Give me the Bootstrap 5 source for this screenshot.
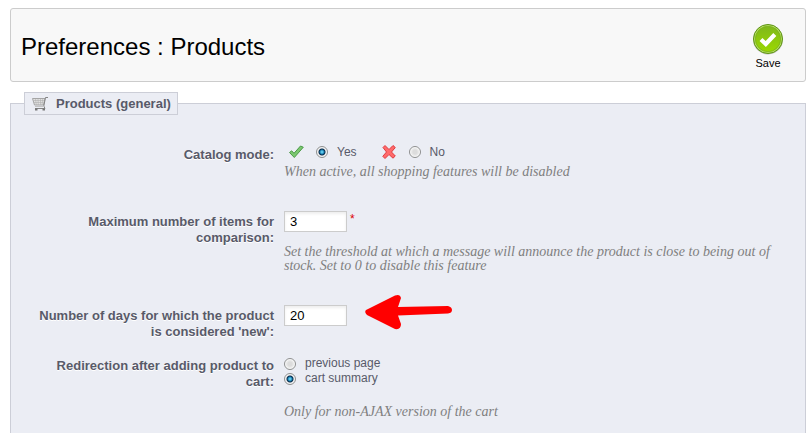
<!DOCTYPE html>
<html lang="en">
<head>
<meta charset="utf-8">
<meta name="viewport" content="width=device-width, initial-scale=1">
<title>Preferences : Products</title>
<link rel="stylesheet" href="https://cdn.jsdelivr.net/npm/bootstrap@5.3.0/dist/css/bootstrap.min.css">
<style>
body{font:12px/15px "Liberation Sans",Arial,sans-serif;color:#585a69;background:#fff;padding:8px 6px 0 10px}
.page-head{background:#f8f8f8;border:1px solid #ccc;border-radius:3px;padding:14px 21px 11px 10px;margin-bottom:10px}
.page-head h1{font-size:24px;line-height:28px;color:#000}
.save-btn{font-size:11px;line-height:14px;color:#000}
.save-btn svg{margin-bottom:1px}
.panel{background:#ebedf4;border:1px solid #ccced7;border-bottom:0;margin-top:11px;padding:0 35px 0 13px}
.panel-title{width:max-content;margin-top:-12px;margin-bottom:29px;padding:0 6px 0 7px;gap:8px;height:23px;border:1px solid #ccced7;background:#ebedf4;font-size:13px;line-height:21px;font-weight:bold}
.field{gap:10px;margin-bottom:32px}
.field-close{margin-bottom:15px}
.field-name{width:250px;flex:none;padding:3px 0 0 5px;text-align:right;font-size:13px;line-height:16px;font-weight:bold;text-shadow:0 1px 0 #fff}
.hint{font:italic 14px/14px Georgia,"Liberation Serif",serif;color:#7f7f7f;margin:0}
.choices{margin-bottom:5px}
.entry{margin-bottom:13px}
.options{padding-top:1px;margin-bottom:19px}
.num{width:63px;height:21px;border:1px solid #ccc;background:#fff;padding:0 5px;font-size:13px;line-height:19px;color:#000;box-shadow:inset 0 2px 3px #eee}
.dot{appearance:none;width:12px;height:12px;margin:0 9px 0 0;flex:none;border:1px solid #8e8f8f;border-radius:50%;background:radial-gradient(circle,#dcdcdc 0 2px,#eee 4px,#fff 5px)}
.choices .dot{margin-left:4px}
.dot:checked{background:radial-gradient(circle,#5cc5ea 0 1px,#137aab 2px,#0b2b4b 3px,#f4f4f4 4px)}
.req{color:#d00;font-size:12px;line-height:16px;margin-left:3px}
.arrow{left:80px;top:-12px}
</style>
<script src="https://cdn.jsdelivr.net/npm/bootstrap@5.3.0/dist/js/bootstrap.bundle.min.js"></script>
</head>
<body class="d-flex flex-column min-vh-100">
<header class="page-head d-flex align-items-center justify-content-between">
  <h1 class="m-0 fw-normal">Preferences : Products</h1>
  <button type="button" class="save-btn border-0 bg-transparent p-0 d-flex flex-column align-items-center">
    <svg width="32" height="32" viewBox="0 0 32 32" aria-hidden="true">
      <defs><linearGradient id="g" x1="0" y1="0" x2="0" y2="1"><stop offset="0" stop-color="#7fb81c"/><stop offset="1" stop-color="#9bd800"/></linearGradient></defs>
      <circle cx="16" cy="16.5" r="15" fill="#8a8a8a" opacity=".5"/>
      <circle cx="16" cy="16" r="14.5" fill="#b5dd62" stroke="#5d9412"/>
      <circle cx="16" cy="16" r="12.7" fill="url(#g)" stroke="#76ac1a" stroke-width=".7"/>
      <path d="M9 16.500l4.800 4.500 9-9.500" fill="none" stroke="#fff" stroke-width="4.200"/>
    </svg>
    Save
  </button>
</header>
<main class="panel flex-grow-1">
  <h2 class="panel-title d-flex align-items-center">
    <svg width="16" height="16" viewBox="0 0 16 16" fill="none" aria-hidden="true">
      <path d="M.5 2.500h12.500l-1.500 6.500H2.500z" fill="#e2e2e2" stroke="#a5a5a5"/>
      <path d="M1.500 4.500h10.500M2 6.500h9.500M3.500 3l.8 6M6 3l.3 6M8.500 3v6M10.700 3l-.7 6" stroke="#b0b0b0" stroke-width=".6"/>
      <path d="M16 1.500h-2.500L11.800 10l1.200 2.500H3" stroke="#858585"/>
      <path d="M3 10.500h9" stroke="#c4c4c4"/>
      <path d="M3 13.500h2.500M10.500 13.500h2.500" stroke="#777" stroke-width="2"/>
    </svg>
    Products (general)
  </h2>
  <div class="field d-flex" role="radiogroup" aria-labelledby="mode">
    <div class="field-name" id="mode">Catalog mode:</div>
    <div>
      <div class="choices d-flex align-items-center">
        <label class="d-flex" for="yes"><svg class="ms-1 me-2" width="16" height="16" viewBox="0 0 16 16" aria-hidden="true"><path d="M1.500 8.500l2.200-1.700 2.300 2.500 6.500-7.300 2.800 1.200-9 10.300z" fill="#7cc870" stroke="#4a9a47"/></svg></label>
        <input class="dot" type="radio" name="mode" id="yes" checked><label for="yes">Yes</label>
        <label class="d-flex" for="no"><svg class="ms-4 me-2" width="16" height="16" viewBox="0 0 16 16" aria-hidden="true"><path d="M2 3.500l2-2 4 4 4-4 2.300 2L10.500 8l3.800 4-2.300 2.200-4-3.700-4 4-2.200-2.200L5.500 8z" fill="#ff6a6a" stroke="#e03a3f"/></svg></label>
        <input class="dot" type="radio" name="mode" id="no"><label for="no">No</label>
      </div>
      <p class="hint">When active, all shopping features will be disabled</p>
    </div>
  </div>
  <div class="field d-flex">
    <label class="field-name" for="max">Maximum number of items for comparison:</label>
    <div>
      <div class="entry d-flex"><input class="num" id="max" type="text" value="3"><span class="req">*</span></div>
      <p class="hint">Set the threshold at which a message will announce the product is close to being out of stock. Set to 0 to disable this feature</p>
    </div>
  </div>
  <div class="field field-close d-flex">
    <label class="field-name" for="days">Number of days for which the product is considered 'new':</label>
    <div class="position-relative">
      <input class="num d-block" id="days" type="text" value="20">
      <svg class="arrow position-absolute" width="90" height="38" viewBox="0 0 90 38" aria-hidden="true"><path d="M2 17L31 2.500Q36 .500 37 5L34 14 84 13Q88 14 88 17T84 20.500L34 22.500 37 31Q37 37 31 36L3 22Q0 19 2 17z" fill="#f00"/></svg>
    </div>
  </div>
  <div class="field d-flex" role="radiogroup" aria-labelledby="redir">
    <div class="field-name" id="redir">Redirection after adding product to cart:</div>
    <div>
      <div class="options">
        <div class="d-flex align-items-center"><input class="dot" type="radio" name="redir" id="prev"><label for="prev">previous page</label></div>
        <div class="d-flex align-items-center"><input class="dot" type="radio" name="redir" id="cart" checked><label for="cart">cart summary</label></div>
      </div>
      <p class="hint">Only for non-AJAX version of the cart</p>
    </div>
  </div>
</main>
</body>
</html>
